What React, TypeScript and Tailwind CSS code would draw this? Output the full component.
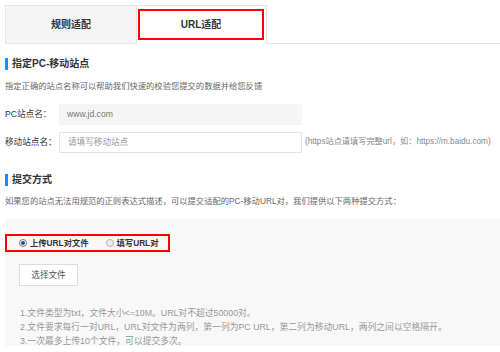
import React from 'react';

const notes = [
  '1.文件类型为txt，文件大小<=10M。URL对不超过50000对。',
  '2.文件要求每行一对URL，URL对文件为两列，第一列为PC URL，第二列为移动URL，两列之间以空格隔开。',
  '3.一次最多上传10个文件，可以提交多次。',
];

const SectionTitle = ({ children }: { children: React.ReactNode }) => (
  <div className="flex items-center h-[13px] pl-[5px]">
    <span className="w-[3px] h-[12px] bg-[#1a8cff] mr-[4px]" />
    <span className="text-[10px] font-bold text-[#333] leading-[13px]">{children}</span>
  </div>
);

const Radio = ({ checked, label }: { checked?: boolean; label: string }) => (
  <label className="flex items-center shrink-0 whitespace-nowrap">
    <span
      className={`w-[8px] h-[8px] shrink-0 rounded-full border flex items-center justify-center ${
        checked ? 'border-[#6b7b8c] bg-white' : 'border-[#b5b5b5] bg-[#eee]'
      }`}
    >
      {checked && <span className="w-[4px] h-[4px] rounded-full bg-[#1f4f8a]" />}
    </span>
    <span className="ml-[3px] text-[8.3px] leading-[12px] font-bold text-[#333]">{label}</span>
  </label>
);

export default function App() {
  return (
    <div
      className="w-[500px] h-[352px] bg-white overflow-hidden text-[#666]"
      style={{ fontFamily: '"Liberation Sans", "Noto Sans CJK SC", sans-serif' }}
    >
      {/* Tabs */}
      <div className="flex pt-[5px] pl-[5px]">
        <div className="w-[132px] h-[39px] bg-[#f5f5f5] border border-[#e5e5e5] flex items-center justify-center text-[10px] font-bold text-[#333]">
          规则适配
        </div>
        <div className="w-[130px] h-[39px] bg-white border-t border-r border-[#e5e5e5] pt-[3px] pb-[4px] pl-[1px] pr-[2px]">
          <div className="w-full h-full border-2 border-[#f00] flex items-center justify-center text-[10px] font-bold text-[#333]">
            URL适配
          </div>
        </div>
        <div className="flex-1 border-b border-[#e5e5e5]" />
      </div>

      {/* Section 1 */}
      <div className="mt-[13px]">
        <SectionTitle>指定PC-移动站点</SectionTitle>
      </div>
      <p className="mt-[10px] pl-[5px] text-[8.3px] leading-[12px]">
        指定正确的站点名称可以帮助我们快速的校验您提交的数据并给您反馈
      </p>

      <div className="mt-[12px] flex items-center h-[21px] pl-[5px]">
        <span className="w-[54px] text-[8.6px] text-[#333]">PC站点名：</span>
        <div className="w-[243px] h-full bg-[#f5f5f5] flex items-center pl-[8px] text-[8.6px] text-[#777]">
          www.jd.com
        </div>
      </div>
      <div className="mt-[7px] flex items-center h-[21px] pl-[5px]">
        <span className="w-[54px] text-[8.6px] text-[#333]">移动站点名：</span>
        <div className="w-[243px] h-full bg-white border border-[#e5e5e5] flex items-center pl-[8px] text-[8.6px] text-[#999]">
          请填写移动站点
        </div>
        <span className="ml-[3px] text-[8.2px] text-[#888] whitespace-nowrap">
          (https站点请填写完整url，如：https://m.baidu.com)
        </span>
      </div>

      {/* Section 2 */}
      <div className="mt-[20px]">
        <SectionTitle>提交方式</SectionTitle>
      </div>
      <p className="mt-[9px] pl-[5px] text-[8.3px] leading-[12px] whitespace-nowrap">
        如果您的站点无法用规范的正则表达式描述，可以提交适配的PC-移动URL对，我们提供以下两种提交方式：
      </p>

      <div className="mt-[12px] ml-[5px] h-[127px] bg-[#f8f8f8] pt-[15px]">
        <div className="w-[165px] h-[18px] border-2 border-[#f00] flex items-center pl-[12px] gap-[17px]">
          <Radio checked label="上传URL对文件" />
          <Radio label="填写URL对" />
        </div>
        <button className="mt-[12px] ml-[14px] w-[59px] h-[22px] bg-white border border-[#ddd] text-[8.6px] text-[#555]">
          选择文件
        </button>
        <div className="mt-[20px] pl-[15px] text-[8.8px] leading-[14px] text-[#999]">
          {notes.map((n, i) => (
            <p key={i} className="whitespace-nowrap">
              {n}
            </p>
          ))}
        </div>
      </div>
    </div>
  );
}
